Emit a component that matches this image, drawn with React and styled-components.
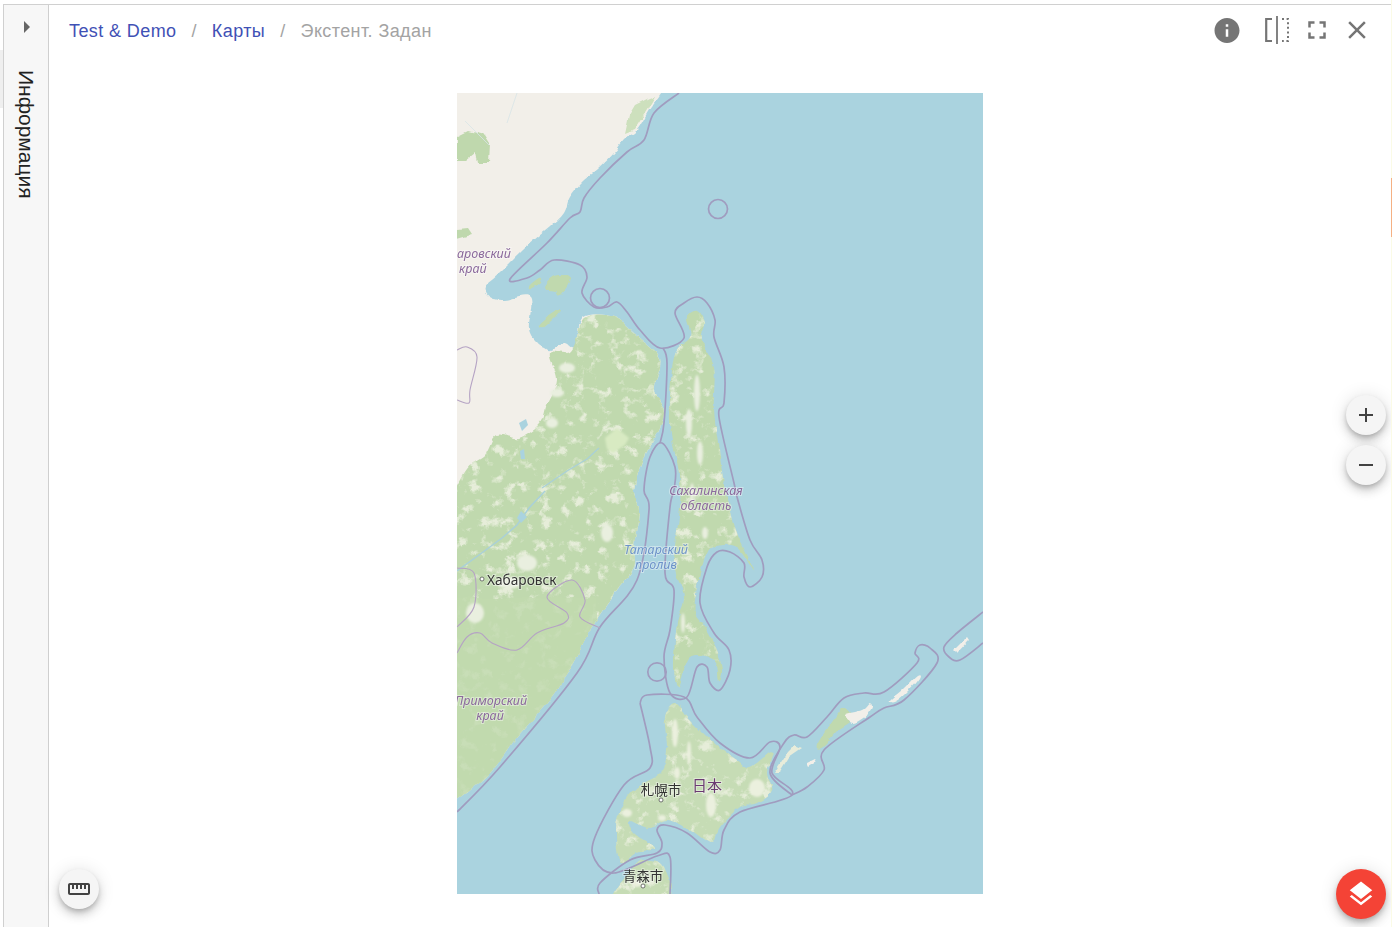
import styled, { createGlobalStyle } from 'styled-components';
import { MdInfo, MdFullscreen, MdClose, MdLayers, MdAdd, MdRemove, MdOutlineStraighten } from 'react-icons/md';

const GlobalStyle = createGlobalStyle`
  html, body {
    margin: 0;
    padding: 0;
    background: #fff;
    font-family: "Liberation Sans", Arial, sans-serif;
  }
`;

const Page = styled.div`
  position: relative;
  height: 927px;
  overflow: hidden;
  padding: 4px 0 0 3px;
  box-sizing: border-box;
`;

const EdgeTab = styled.div`
  position: absolute;
  z-index: 1;
  width: ${(p) => p.$width}px;
  height: ${(p) => p.$height}px;
  top: ${(p) => p.$top}px;
  ${(p) => (p.$right ? 'right: 0;' : 'left: 0;')}
  background: ${(p) => p.$color};
`;

const Frame = styled.div`
  position: relative;
  display: flex;
  height: 100%;
  border-top: 1px solid #d0d0d0;
  border-left: 1px solid #d0d0d0;
`;

const Sidebar = styled.aside`
  width: 44px;
  flex: none;
  display: flex;
  flex-direction: column;
  align-items: center;
  background: #f7f7f7;
  border-right: 1px solid #cfcfcf;
`;

const Arrow = styled.span`
  width: 0;
  height: 0;
  margin: 16px 0 0 1px;
  border-left: 6px solid #666;
  border-top: 6px solid transparent;
  border-bottom: 6px solid transparent;
`;

const SideLabel = styled.div`
  margin-top: 37px;
  writing-mode: vertical-rl;
  font-size: 21px;
  line-height: 24px;
  color: #222;
`;

const Content = styled.main`
  flex: 1;
  min-width: 0;
  display: flex;
  flex-direction: column;
  align-items: center;
  padding-right: 1px;
`;

const TopBar = styled.header`
  align-self: stretch;
  height: 88px;
  flex: none;
  display: flex;
  justify-content: space-between;
  align-items: flex-start;
  padding: 11px 19px 0 20px;
  box-sizing: border-box;
`;

const Crumbs = styled.nav`
  display: flex;
  align-items: center;
  height: 28px;
  margin-top: 1px;
  font-size: 18px;
  letter-spacing: 0.4px;
`;

const Crumb = styled.span`
  color: ${(p) => (p.$current ? '#a3a3a3' : '#3f51b5')};
`;

const Slash = styled.span`
  color: #a3a3a3;
  margin: 0 15px;
`;

const Tools = styled.div`
  display: flex;
  align-items: center;
  gap: 10px;
  height: 28px;
  color: #757575;
`;

const ToolButton = styled.button`
  width: 30px;
  height: 30px;
  padding: 0;
  margin-right: ${(p) => p.$gap || 0}px;
  border: 0;
  background: none;
  color: inherit;
  display: flex;
  align-items: center;
  justify-content: center;
`;

const Fab = styled.button`
  position: absolute;
  width: ${(p) => p.$size || 40}px;
  height: ${(p) => p.$size || 40}px;
  left: ${(p) => p.$left}px;
  top: ${(p) => p.$top}px;
  padding: 0;
  border: 0;
  border-radius: 50%;
  display: flex;
  align-items: center;
  justify-content: center;
  color: ${(p) => (p.$red ? '#fff' : '#424242')};
  background: ${(p) => (p.$red ? '#f44336' : '#f5f5f5')};
  box-shadow: 0 3px 5px -1px rgba(0, 0, 0, 0.2), 0 6px 10px 0 rgba(0, 0, 0, 0.14), 0 1px 18px 0 rgba(0, 0, 0, 0.12);
`;

const MapPicture = styled.svg`
  display: block;
  width: 526px;
  height: 801px;
  flex: none;
  filter: blur(0.5px);
`;

const Label = styled.text`
  font-family: "Noto Sans", "Noto Sans CJK JP", sans-serif;
  font-style: ${(p) => (p.$plain ? 'normal' : 'italic')};
  font-size: ${(p) => p.$size || 12.5}px;
  fill: ${(p) => p.$color || '#8b6a9c'};
  stroke: rgba(255, 255, 255, 0.4);
  stroke-width: 2px;
  paint-order: stroke;
  text-anchor: ${(p) => p.$anchor || 'middle'};
`;

// catmull-rom through the points, so the traced outlines stay round
const smooth = (pts, closed) => {
  const at = (i) => (closed ? pts[(i + pts.length) % pts.length] : pts[Math.max(0, Math.min(pts.length - 1, i))]);
  let d = `M${pts[0][0]} ${pts[0][1]}`;
  const count = closed ? pts.length : pts.length - 1;
  for (let i = 0; i < count; i++) {
    const [p0, p1, p2, p3] = [at(i - 1), at(i), at(i + 1), at(i + 2)];
    const c1 = [p1[0] + (p2[0] - p0[0]) / 6, p1[1] + (p2[1] - p0[1]) / 6];
    const c2 = [p2[0] - (p3[0] - p1[0]) / 6, p2[1] - (p3[1] - p1[1]) / 6];
    d += `C${c1[0].toFixed(1)} ${c1[1].toFixed(1)} ${c2[0].toFixed(1)} ${c2[1].toFixed(1)} ${p2[0]} ${p2[1]}`;
  }
  return closed ? d + 'Z' : d;
};

// map coords are page coords minus the picture's corner
const mainland = [[207,-6],[192,17],[180,37],[167,47],[157,60],[140,77],[127,87],[113,104],[107,120],[93,134],[77,147],[63,160],[43,180],[28,194],[33,204],[47,207],[73,204],[72,237],[80,250],[87,255],[93,257],[107,250],[117,253],[127,224],[157,224],[177,240],[200,260],[203,274],[197,297],[207,320],[197,347],[187,364],[177,397],[182,417],[177,454],[177,474],[160,497],[133,537],[117,570],[90,610],[60,644],[33,680],[0,707],[-12,712],[-20,700],[-20,600],[-20,300],[-20,20],[-15,-6],[0,-10],[100,-10],[195,-10]];
const forest = [[128,225],[157,224],[177,240],[200,260],[203,274],[197,297],[207,320],[197,347],[187,364],[177,397],[182,417],[177,454],[177,474],[160,497],[133,537],[117,570],[90,610],[60,644],[33,680],[0,707],[-12,712],[-20,700],[-20,600],[-20,500],[-18,430],[-8,410],[10,376],[28,362],[40,342],[62,345],[83,330],[90,312],[100,287],[93,260],[113,258]];
const sakhalin = [[240,217],[248,230],[245,247],[257,274],[257,317],[263,364],[268,397],[272,410],[280,440],[297,477],[280,454],[257,454],[248,464],[240,494],[238,520],[248,534],[260,557],[265,577],[262,587],[257,567],[233,564],[222,594],[217,574],[220,530],[227,504],[217,470],[223,414],[222,380],[213,330],[217,264],[233,244],[230,224]];
const hokkaido = [[218,610],[233,627],[257,650],[280,667],[293,674],[315,659],[310,680],[315,697],[300,710],[283,714],[263,734],[255,750],[233,737],[210,727],[192,735],[173,727],[177,740],[197,755],[180,759],[163,769],[160,727],[177,697],[203,680],[210,657],[208,624]];
const honshu = [[190,767],[207,774],[212,810],[155,810],[177,774]];
const border = '#a09cbf';
const boundaries = [
  [[222,0],[197,20],[187,47],[170,59],[143,85],[127,105],[123,119],[113,125],[90,150],[53,186],[70,185],[83,177],[97,167],[123,172],[130,184],[125,200],[137,214],[150,214],[160,209],[170,219],[183,237],[203,255],[227,245],[218,220],[227,210],[240,204],[250,210],[258,227],[257,244],[267,274],[267,310],[262,324],[277,390],[280,404],[293,447],[305,467],[305,484],[293,494],[287,484],[287,470],[273,459],[260,459],[250,474],[243,510],[257,540],[272,557],[273,577],[263,597],[253,590],[250,574],[240,574],[230,604],[213,600],[207,564],[213,537],[217,497],[208,480],[213,414],[217,397],[218,374],[205,350],[193,364],[187,397],[192,417],[180,487],[143,534],[120,580],[43,674],[0,719]],
  [[206,255],[210,270],[207,330],[203,350]],
  [[183,610],[190,602],[227,604],[240,624],[263,650],[293,665],[313,649],[323,654],[315,680],[335,702],[283,719],[267,737],[263,757],[253,759],[230,740],[208,732],[200,737],[205,750],[200,760],[173,767],[143,790],[142,801]],
  [[183,610],[193,654],[193,675],[167,692],[138,744],[138,767],[157,780],[200,763],[213,764],[213,801]],
  [[335,702],[350,694],[367,677],[367,657],[413,624],[427,615],[447,607],[480,570],[473,555],[463,552],[458,560],[460,570],[427,599],[407,600],[387,605],[370,624],[350,644],[337,642],[327,650],[313,680],[335,702]],
  [[526,519],[500,540],[487,554],[492,564],[503,567],[526,550]],
];
const landBorders = [
  [[0,257],[10,254],[20,264],[13,297],[12,310],[0,307]],
  [[0,475],[17,480],[17,514],[0,534]],
  [[0,560],[10,544],[23,540],[35,550],[60,557],[80,540],[107,530],[110,520],[90,504],[115,487],[128,507],[123,524],[143,535]],
];
const clearings = [[110,275,8,5],[100,300,7,4],[95,330,6,5],[52,490,12,6],[70,470,10,8],[150,440,6,9],[18,520,9,10],[240,300,3,18],[232,330,3,14],[243,360,3,12],[235,400,2,10],[248,440,3,6],[226,530,2,10]];
const japanLight = [[218,640,3,14],[232,660,2,12],[220,680,3,6],[254,712,5,12],[300,695,8,9],[170,720,5,4],[205,725,4,3],[190,700,4,3],[180,790,6,4]];
const whiteIslands = [
  [[433,607],[445,597],[460,582],[462,585],[448,601],[437,609]],
  [[388,622],[405,617],[413,610],[416,614],[410,622],[396,630]],
];
const greenIslands = [
  [[87,195],[98,183],[113,185],[103,202],[98,198]],
  [[71,194],[82,185],[84,189],[74,196]],
  [[82,232],[93,222],[104,216],[96,226],[86,235]],
  [[360,652],[378,625],[388,615],[396,626],[380,638],[366,654]],
];

function MapDrawing() {
  return (
    <MapPicture viewBox="0 0 526 801">
      <defs>
        <filter id="rough" x="-5%" y="-5%" width="110%" height="110%">
          <feTurbulence type="fractalNoise" baseFrequency="0.09" numOctaves="3" seed="4" />
          <feDisplacementMap in="SourceGraphic" scale="5" xChannelSelector="R" yChannelSelector="G" />
        </filter>
        <filter id="mottle" x="0" y="0" width="100%" height="100%" colorInterpolationFilters="sRGB">
          <feTurbulence type="fractalNoise" baseFrequency="0.085" numOctaves="4" seed="11" />
          <feColorMatrix values="0 0 0 0 0.9  0 0 0 0 0.93  0 0 0 0 0.85  5 0 0 0 -2.75" />
        </filter>
        <filter id="soft"><feGaussianBlur stdDeviation="1.2" /></filter>
        <clipPath id="greens">
          <path d={smooth(forest, true)} />
          <path d={smooth(sakhalin, true)} />
          <path d={smooth(hokkaido, true)} />
          <path d={smooth(honshu, true)} />
        </clipPath>
      </defs>
      <rect width="526" height="801" fill="#aad3df" />
      <g filter="url(#rough)">
        <path d={smooth(mainland, true)} fill="#f2efe9" />
        <path d="M0 44L12 38L28 42L33 50L32 70L20 70L18 60L8 68L0 68Z" fill="#bfd8ad" />
        <path d="M0 137L10 136L14 142L0 146Z" fill="#bfd8ad" />
        <path d="M172 22L178 12L192 5L198 3L190 17L178 36L168 40Z" fill="#cde0bd" />
        <path d={smooth(forest, true)} fill="#c0d9ae" />
        <path d={smooth(sakhalin, true)} fill="#c0d9ae" />
        <path d={smooth(hokkaido, true)} fill="#c6dcb5" />
        <path d={smooth(honshu, true)} fill="#c6dcb5" />
        <rect width="526" height="801" filter="url(#mottle)" clipPath="url(#greens)" />
        {/* the south of the mainland is almost unbroken forest */}
        <rect x="-10" y="505" width="150" height="300" fill="#c0d9ae" opacity="0.8" clipPath="url(#greens)" />
        {greenIslands.map((pts) => (
          <path key={pts[0].join()} d={smooth(pts, true)} fill="#c0d9ae" />
        ))}
        {whiteIslands.map((pts) => (
          <path key={pts[0].join()} d={smooth(pts, true)} fill="#f2efe9" />
        ))}
        <path d="M317 680L330 660L338 652L345 655L332 664L322 680Z" fill="#e8ecda" />
        <path d="M350 670L358 666L360 669L352 674Z" fill="#f2efe9" />
        <path d="M497 557L510 544L512 547L500 560Z" fill="#f2efe9" />
      </g>
      <g filter="url(#soft)">
        {clearings.map(([x, y, rx, ry]) => (
          <ellipse key={`${x}-${y}`} cx={x} cy={y} rx={rx} ry={ry} fill="#e9efdf" />
        ))}
        {japanLight.map(([x, y, rx, ry]) => (
          <ellipse key={`${x}-${y}`} cx={x} cy={y} rx={rx} ry={ry} fill="#ebf0de" />
        ))}
        <path d="M148 345L160 335L172 345L168 352L156 360L150 356Z" fill="#d8eac2" />
      </g>
      <path d="M85 395L110 378L130 366L142 355" fill="none" stroke="#a9d0d8" strokeWidth="1.2" />
      <path d="M0 478L22 462L45 445L60 432L72 415L88 398" fill="none" stroke="#a9d0d8" strokeWidth="1.5" />
      <path d="M60 425L64 418L70 424L64 430Z" fill="#aad3df" />
      <path d="M62 330L69 326L71 332L65 338Z" fill="#aad3df" />
      <path d="M63 358L67 356L68 366L64 366Z" fill="#aad3df" />
      <path d="M8 28L32 52M60 0L50 30" fill="none" stroke="#d8e4e6" strokeWidth="0.8" />
      {boundaries.map((pts) => (
        <path key={pts[0].join()} d={smooth(pts)} fill="none" stroke={border} strokeWidth="1.7" strokeLinejoin="round" />
      ))}
      {landBorders.map((pts) => (
        <path key={pts[0].join()} d={smooth(pts)} fill="none" stroke="#b5a3c4" strokeWidth="1.1" />
      ))}
      <circle cx="261" cy="116" r="9.5" fill="none" stroke={border} strokeWidth="1.7" />
      <circle cx="143" cy="205" r="9.5" fill="none" stroke={border} strokeWidth="1.7" />
      <circle cx="200" cy="579" r="9.2" fill="none" stroke={border} strokeWidth="1.7" />
      <Label x="0" y="165" $anchor="start">аровский</Label>
      <Label x="2" y="180" $anchor="start">край</Label>
      <Label x="249" y="402">Сахалинская</Label>
      <Label x="249" y="417">область</Label>
      <Label x="199" y="461" $color="#6d93c9">Татарский</Label>
      <Label x="199" y="476" $color="#6d93c9">пролив</Label>
      <Label x="30" y="492" $anchor="start" $plain $size={13.7} $color="#333">Хабаровск</Label>
      <circle cx="25" cy="486" r="2" fill="#fff" stroke="#555" strokeWidth="0.8" />
      <Label x="34" y="612">Приморский</Label>
      <Label x="33" y="627">край</Label>
      <Label x="204" y="702" $plain $size={13.5} $color="#333">札幌市</Label>
      <circle cx="204" cy="707" r="2" fill="#fff" stroke="#555" strokeWidth="0.8" />
      <Label x="250" y="698" $plain $size={15} $color="#6b3a72">日本</Label>
      <Label x="186" y="788" $plain $size={13.5} $color="#333">青森市</Label>
      <circle cx="186" cy="793" r="2" fill="#fff" stroke="#555" strokeWidth="0.8" />
    </MapPicture>
  );
}

function CompareIcon() {
  return (
    <svg width="26" height="28" viewBox="0 0 26 28" fill="none" stroke="currentColor">
      <path d="M8 3H2.2V25H8" strokeWidth="2.2" />
      <path d="M13 0V28" strokeWidth="1.8" />
      <path d="M18 3H24V25H18" strokeWidth="2" strokeDasharray="2 2.6" />
    </svg>
  );
}

export default function App() {
  return (
    <Page>
      <GlobalStyle />
      <EdgeTab $width={3} $height={58} $top={50} $color="#efefef" />
      <EdgeTab $right $width={1} $height={927} $top={0} $color="#fbfbe6" />
      <EdgeTab $right $width={1} $height={59} $top={178} $color="#f5b183" />
      <Frame>
        <Sidebar>
          <Arrow />
          <SideLabel>Информация</SideLabel>
        </Sidebar>
        <Content>
          <TopBar>
            <Crumbs>
              <Crumb>Test &amp; Demo</Crumb>
              <Slash>/</Slash>
              <Crumb>Карты</Crumb>
              <Slash>/</Slash>
              <Crumb $current>Экстент. Задан</Crumb>
            </Crumbs>
            <Tools>
              <ToolButton $gap={10}><MdInfo size={31} /></ToolButton>
              <ToolButton><CompareIcon /></ToolButton>
              <ToolButton><MdFullscreen size={30} /></ToolButton>
              <ToolButton><MdClose size={30} /></ToolButton>
            </Tools>
          </TopBar>
          <MapDrawing />
        </Content>
        <Fab $left={1342} $top={390}><MdAdd size={24} /></Fab>
        <Fab $left={1342} $top={440}><MdRemove size={24} /></Fab>
        <Fab $left={55} $top={864}><MdOutlineStraighten size={24} /></Fab>
        <Fab $red $size={50} $left={1332} $top={864}><MdLayers size={30} /></Fab>
      </Frame>
    </Page>
  );
}
